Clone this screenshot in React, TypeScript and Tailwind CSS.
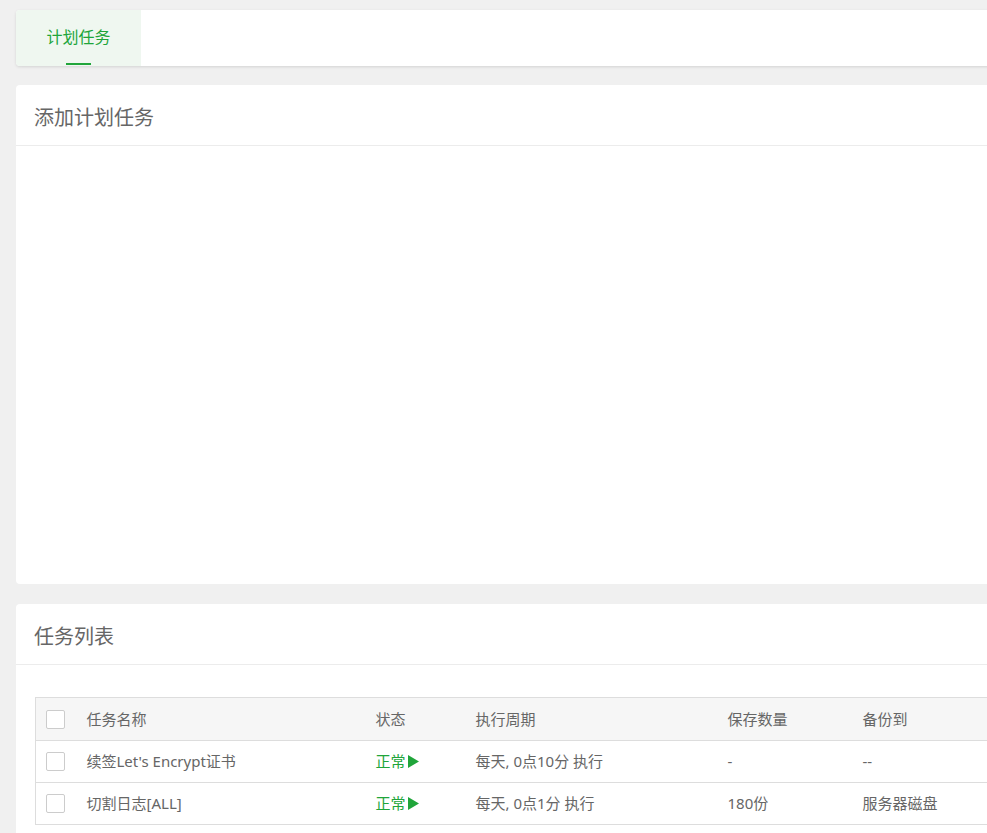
const FONT = "font-['Noto_Sans','Noto_Sans_CJK_SC',sans-serif]";

const ROWS = [
  { name: "续签Let's Encrypt证书", status: "正常", cycle: "每天, 0点10分 执行", keep: "-", backup: "--" },
  { name: "切割日志[ALL]", status: "正常", cycle: "每天, 0点1分 执行", keep: "180份", backup: "服务器磁盘" },
];

function Checkbox() {
  return <span className="block w-[19px] h-[19px] border border-[#ccc] rounded-[2px] bg-white" />;
}

function CardHeader({ title }: { title: string }) {
  return (
    <div className="h-[61px] flex items-center pt-[5px] px-[18px] border-b border-[#ececec]">
      <h2 className="text-[20px] text-[#666] leading-none">{title}</h2>
    </div>
  );
}

export default function App() {
  return (
    <div className={`min-h-[833px] bg-[#f0f0f0] overflow-hidden ${FONT}`}>
      <div className="ml-4 w-[1200px] pt-[10px] flex flex-col">
        {/* Tabs */}
        <div className="h-[56px] bg-white rounded-l-[4px] shadow-[0_1px_3px_rgba(0,0,0,0.12)] flex overflow-hidden">
          <div className="relative w-[125px] bg-[#eff7f0] flex items-center justify-center">
            <span className="text-[16px] text-[#20a53a] pb-[2px]">计划任务</span>
            <span className="absolute bottom-[1px] left-[50px] w-[25px] h-[2px] bg-[#20a53a]" />
          </div>
        </div>

        {/* Add task */}
        <div className="mt-[19px] h-[499px] bg-white rounded-l-[4px]">
          <CardHeader title="添加计划任务" />
        </div>

        {/* Task list */}
        <div className="mt-[20px] bg-white rounded-l-[4px] pb-10">
          <CardHeader title="任务列表" />
          <div className="pt-[32px] pl-[19px]">
            <table className="w-[1100px] border-collapse border border-[#ddd] text-[15px] text-[#666] table-fixed">
              <colgroup>
                <col className="w-[41px]" />
                <col className="w-[289px]" />
                <col className="w-[100px]" />
                <col className="w-[252px]" />
                <col className="w-[135px]" />
                <col />
              </colgroup>
              <thead>
                <tr className="h-[43px] bg-[#f6f6f6] border-b border-[#ddd]">
                  <th className="pl-[10px] text-left font-normal"><Checkbox /></th>
                  <th className="pl-[10px] text-left font-normal">任务名称</th>
                  <th className="pl-[10px] text-left font-normal">状态</th>
                  <th className="pl-[10px] text-left font-normal">执行周期</th>
                  <th className="pl-[10px] text-left font-normal">保存数量</th>
                  <th className="pl-[10px] text-left font-normal">备份到</th>
                </tr>
              </thead>
              <tbody>
                {ROWS.map((r) => (
                  <tr key={r.name} className="h-[42px] border-b border-[#ddd]">
                    <td className="pl-[10px]"><Checkbox /></td>
                    <td className="pl-[10px]">{r.name}</td>
                    <td className="pl-[10px] text-[#20a53a]">
                      <span className="inline-flex items-center">
                        {r.status}
                        <svg width="11" height="13" viewBox="0 0 11 13" className="ml-[2px]">
                          <path d="M0 0 L11 6.5 L0 13 Z" fill="#20a53a" />
                        </svg>
                      </span>
                    </td>
                    <td className="pl-[10px]">{r.cycle}</td>
                    <td className="pl-[10px]">{r.keep}</td>
                    <td className="pl-[10px]">{r.backup}</td>
                  </tr>
                ))}
              </tbody>
            </table>
          </div>
        </div>
      </div>
    </div>
  );
}
